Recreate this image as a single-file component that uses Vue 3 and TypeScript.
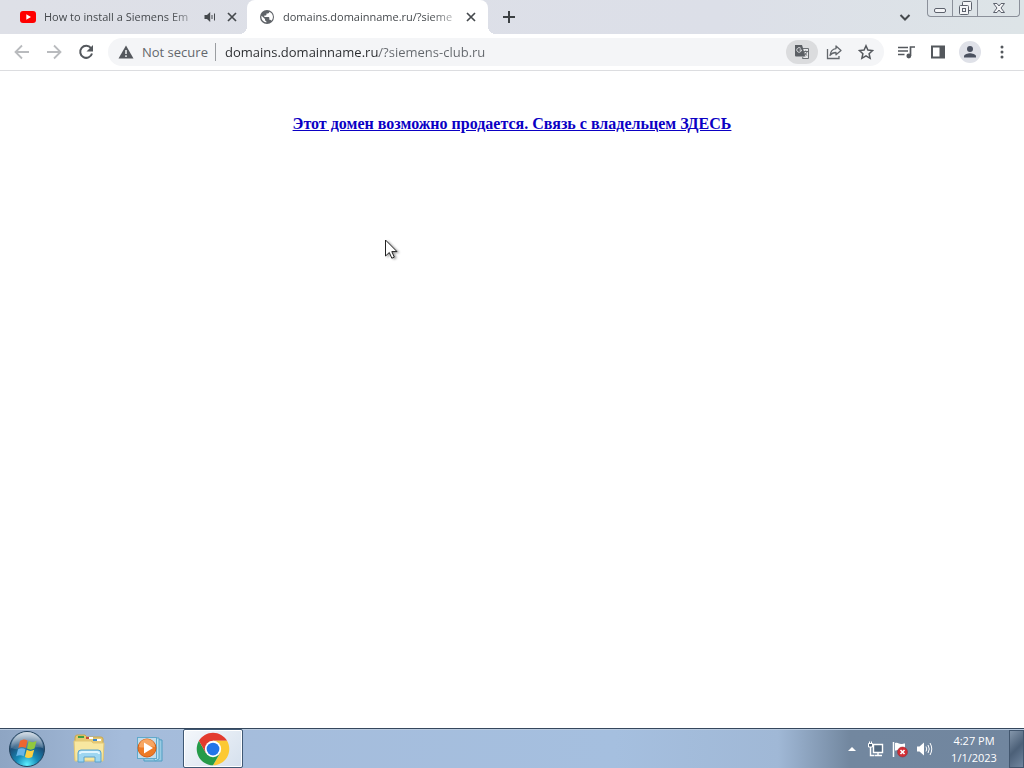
<script setup lang="ts">
import { ref } from 'vue'

const address = ref('domains.domainname.ru/?siemens-club.ru')
</script>

<template>
  <div class="desktop">
    <header class="tabstrip">
      <div class="tab tab-back">
        <svg class="icon" width="16" height="16" viewBox="0 0 16 16" aria-hidden="true">
          <rect x="0" y="2" width="16" height="12" rx="3" fill="#f00" />
          <path d="M6.3 5.2v5.6L11 8z" fill="#fff" />
        </svg>
        <span class="title">How to install a Siemens Em</span>
        <button class="plain" aria-label="Mute tab">
          <svg width="16" height="16" viewBox="0 0 16 16">
            <path d="M2.500 6H5l3.200-3v10L5 10H2.500z" fill="#45494d" />
            <path d="M10 6v4M12.500 4.500v7" stroke="#45494d" fill="none" />
          </svg>
        </button>
        <button class="plain close" aria-label="Close tab">
          <svg width="16" height="16" viewBox="0 0 16 16">
            <path d="M4 4l8 8M12 4l-8 8" stroke="#45494d" stroke-width="1.700" />
          </svg>
        </button>
      </div>
      <div class="tab tab-front">
        <svg class="icon" width="16" height="16" viewBox="0 0 24 24" aria-hidden="true">
          <path fill="#5f6368" d="M12 1.500a10.500 10.500 0 1 0 0 21 10.500 10.500 0 0 0 0-21zm-1 18.800A8.400 8.400 0 0 1 3.800 10.100L9 15v1.100c0 1.200.9 2.100 2 2.100zm7.500-2.500c-.3-.9-1.100-1.500-2-1.500h-1v-3.200c0-.6-.5-1.100-1.100-1.100H8V9.900h2.100c.6 0 1.100-.5 1.100-1.100V6.700h2.100c1.200 0 2.100-1 2.100-2.100V4a8.500 8.500 0 0 1 3.100 13.800z" />
        </svg>
        <span class="title">domains.domainname.ru/?sieme</span>
        <button class="plain close" aria-label="Close tab">
          <svg width="16" height="16" viewBox="0 0 16 16">
            <path d="M4 4l8 8M12 4l-8 8" stroke="#45494d" stroke-width="1.700" />
          </svg>
        </button>
      </div>
      <button class="plain new-tab" aria-label="New tab">
        <svg width="16" height="16" viewBox="0 0 16 16">
          <path d="M8 2v12M2 8h12" stroke="#3c4043" stroke-width="2" />
        </svg>
      </button>
      <div class="spacer"></div>
      <button class="plain search-tabs" aria-label="Search tabs">
        <svg width="16" height="16" viewBox="0 0 16 16">
          <path d="M3.500 6L8 10.500 12.500 6" stroke="#45494d" stroke-width="2" fill="none" />
        </svg>
      </button>
      <div class="window-buttons">
        <button aria-label="Minimize">
          <svg width="14" height="14" viewBox="0 0 14 14">
            <rect x="1.500" y="7.500" width="11" height="4" rx="1.500" fill="#f4f5f7" stroke="#5d626d" />
          </svg>
        </button>
        <button aria-label="Restore">
          <svg width="14" height="14" viewBox="0 0 14 14" fill="#f4f5f7" stroke="#5d626d">
            <rect x="4.500" y=".5" width="9" height="9" rx="1" />
            <rect x="1.500" y="4.500" width="9" height="9" rx="1" />
            <rect x="4.500" y="7.500" width="3" height="3" />
          </svg>
        </button>
        <button class="wide" aria-label="Close window">
          <svg width="14" height="14" viewBox="0 0 14 14">
            <path d="M1.500 2.500h3.500l2 2.500 2-2.500h3.500L9 7l3.500 4.500H9L7 9l-2 2.500H1.500L5 7z" fill="#f4f5f7" stroke="#5d626d" />
          </svg>
        </button>
      </div>
    </header>

    <nav class="toolbar">
      <button class="tool" aria-label="Back">
        <svg width="16" height="16" viewBox="0 0 16 16" fill="none" stroke="#b9bbbe" stroke-width="1.800">
          <path d="M15 8H2M8 1.500L1.500 8 8 14.500" />
        </svg>
      </button>
      <button class="tool" aria-label="Forward">
        <svg width="16" height="16" viewBox="0 0 16 16" fill="none" stroke="#b9bbbe" stroke-width="1.800">
          <path d="M1 8h13M8 1.500L14.500 8 8 14.500" />
        </svg>
      </button>
      <button class="tool" aria-label="Reload">
        <svg width="16" height="16" viewBox="0 0 16 16">
          <path d="M13 4.200A6 6 0 1 0 14 9.500" fill="none" stroke="#54585d" stroke-width="2" />
          <path d="M15 1v6.500H8.500z" fill="#54585d" />
        </svg>
      </button>
      <div class="omnibox">
        <button class="security">
          <svg width="16" height="16" viewBox="0 0 16 16">
            <path d="M8 1.500L15.500 14.500H.5z" fill="#54585d" />
            <path d="M8 6v4M8 11.200v1.800" stroke="#f1f3f4" stroke-width="1.500" />
          </svg>
          <span>Not secure</span>
        </button>
        <input v-model="address" class="address" type="text" aria-label="Address and search bar" spellcheck="false" />
        <button class="tool translate" aria-label="Translate this page">
          <svg width="16" height="16" viewBox="0 0 16 16">
            <path d="M7.500 4.500h7v10h-6" fill="#e8e9eb" stroke="#6b6f73" />
            <path d="M1 1h7l3.500 11.500H2a1 1 0 0 1-1-1z" fill="#5b5f64" />
            <path d="M7.500 6H5.500M7.400 6A2.300 2.300 0 1 1 6.800 4.400" fill="none" stroke="#e4e5e7" />
            <path d="M9.500 7.500h4.500M11.700 6.500v1M13 7.500c-.4 2-1.500 3-3 4M10.500 8.500c.5 1.300 1.500 2.200 2.700 3M9 12.500l-.5 2" fill="none" stroke="#6b6f73" />
          </svg>
        </button>
        <button class="tool" aria-label="Share this page">
          <svg width="16" height="16" viewBox="0 0 16 16" fill="none" stroke="#63676c" stroke-width="1.300">
            <path d="M1.500 5v9.500h11.500V12" />
            <path d="M10 2l5 4.500-5 4.300V8.500c-2.500 0-4.500.8-6 3C4.500 7.500 6.500 5 10 4.600z" stroke-linejoin="round" />
          </svg>
        </button>
        <button class="tool" aria-label="Bookmark this tab">
          <svg width="16" height="16" viewBox="0 0 16 16">
            <path d="M8 1.800l1.900 4.300 4.700.5-3.500 3.100 1 4.600L8 11.900l-4.100 2.400 1-4.600L1.400 6.600l4.700-.5z" fill="none" stroke="#54585d" stroke-width="1.500" />
          </svg>
        </button>
      </div>
      <button class="tool" aria-label="Media controls">
        <svg width="18" height="16" viewBox="0 0 18 16">
          <path d="M1 3.500h10M1 7h10M1 10.500h6.500M13.500 12V3H18" fill="none" stroke="#54585d" stroke-width="1.700" />
          <circle cx="11.800" cy="12" r="2.400" fill="#54585d" />
        </svg>
      </button>
      <button class="tool" aria-label="Side panel">
        <svg width="16" height="16" viewBox="0 0 16 16">
          <path d="M1 1.500h14v13H1zM3 3.500v9h6.500v-9z" fill="#54585d" fill-rule="evenodd" />
        </svg>
      </button>
      <button class="tool" aria-label="Profile">
        <svg width="22" height="22" viewBox="0 0 22 22">
          <circle cx="11" cy="11" r="11" fill="#dfe1e8" />
          <circle cx="11" cy="8" r="3" fill="#4b5160" />
          <path d="M5 16.500v-1.300c0-2 4-3 6-3s6 1 6 3v1.300z" fill="#4b5160" />
        </svg>
      </button>
      <button class="tool" aria-label="Menu">
        <svg width="16" height="16" viewBox="0 0 16 16" fill="#54585d">
          <circle cx="8" cy="3" r="1.500" />
          <circle cx="8" cy="8" r="1.500" />
          <circle cx="8" cy="13" r="1.500" />
        </svg>
      </button>
    </nav>

    <main class="page">
      <a href="#contact">Этот домен возможно продается. Связь с владельцем ЗДЕСЬ</a>
      <svg class="pointer" width="16" height="22" viewBox="0 0 16 22" aria-hidden="true">
        <path d="M1.500 1v16l3.800-3.500 2.500 5.700 2.500-1.100-2.500-5.500h5.200z" fill="#fff" stroke="#222" />
      </svg>
    </main>

    <footer class="taskbar">
      <button class="task start" aria-label="Start">
        <svg width="38" height="38" viewBox="0 0 38 38">
          <defs>
            <radialGradient id="orb" cx=".5" cy=".95" r=".9">
              <stop offset="0" stop-color="#5ff0ff" />
              <stop offset=".35" stop-color="#168bb8" />
              <stop offset=".7" stop-color="#1c4e78" />
              <stop offset="1" stop-color="#7d99b4" />
            </radialGradient>
            <linearGradient id="gloss" x2="0" y2="1">
              <stop offset="0" stop-color="#fff" stop-opacity=".65" />
              <stop offset="1" stop-color="#fff" stop-opacity=".12" />
            </linearGradient>
          </defs>
          <circle cx="19" cy="19" r="17.500" fill="url(#orb)" stroke="#24435e" />
          <path d="M3 18a16 16 0 0 1 32 0c-9-3-22 4-32 0z" fill="url(#gloss)" />
          <path d="M12 11c3-2 5-2 7.500-.5L17.800 18c-2.500-1.500-5-1.500-7.500 0z" fill="#ed6530" />
          <path d="M20.700 11c2.500 1.500 5 1.500 7.800 0l-2 7.500c-2.500 1.500-5 1.500-7.500 0z" fill="#91c83e" />
          <path d="M10 19.300c2.500-1.500 5-1.500 7.500 0l-1.800 7c-2.500-1.500-5-1.300-7.500 0z" fill="#67b5e8" />
          <path d="M18.700 19.800c2.500 1.500 5 1.500 7.500 0l-2 7.200c-2.500 1.400-5 1.400-7.300 0z" fill="#fbd043" />
        </svg>
      </button>
      <button class="task explorer" aria-label="Windows Explorer">
        <svg width="34" height="32" viewBox="0 0 34 32">
          <path d="M3 5q0-3 2-3h8l2 2h14q2 0 2 2v21H3z" fill="#e7ca73" stroke="#c9a64d" />
          <path d="M6 3h6v2H6z" fill="#3e9d45" />
          <path d="M14 4h7v2h-7z" fill="#fff" />
          <path d="M14 4h3v2h-3z" fill="#c94a37" />
          <path d="M21 6h8v2h-8z" fill="#fff" />
          <path d="M21 6h4v2h-4z" fill="#3b86cc" />
          <path d="M2 8h17l2 2h11l-1 18H3z" fill="#f8e7a0" stroke="#e2c776" />
          <path d="M6 29V20q0-3 3-3h17q3 0 3 3v9h-6v-5H12v5z" fill="#9ed6f1" stroke="#5ba3cc" />
          <path d="M8 21q0-2 2-2h15q2 0 2 2" fill="none" stroke="#dff5ff" stroke-width="2" />
        </svg>
      </button>
      <button class="task" aria-label="Windows Media Player">
        <svg width="30" height="28" viewBox="0 0 30 28">
          <path d="M8 3l19 2v21H9z" fill="#9acbe3" stroke="#4f9dc2" />
          <path d="M7 3h17v21l-4 2z" fill="#bce0ef" stroke="#5aa6c9" />
          <rect x="2.500" y="2.500" width="19" height="21" fill="#c3dcea" stroke="#60a9cb" />
          <circle cx="12" cy="13" r="9" fill="#ed7b26" stroke="#d45d14" />
          <path d="M4 12a8 8 0 0 1 16 0c-5-2-10 2-16 0z" fill="#f7a662" />
          <path d="M9 7.500v11L18 13z" fill="#fff" />
        </svg>
      </button>
      <button class="task active" aria-label="Google Chrome">
        <svg width="34" height="34" viewBox="0 0 48 48">
          <path d="M24 24L4.100 12.500A23 23 0 0 1 43.900 12.500H24z" fill="#e33b2e" />
          <path d="M24 12.500h19.900A23 23 0 0 1 24 47l10-17.200z" fill="#fcc934" />
          <path d="M14 29.800L4.100 12.500A23 23 0 0 0 24 47l10-17.200z" fill="#269b49" />
          <path d="M4.100 12.500L14 29.800l10-17.300z" fill="#e33b2e" />
          <circle cx="24" cy="24" r="11.500" fill="#fff" />
          <circle cx="24" cy="24" r="9" fill="#2475e8" />
        </svg>
      </button>
      <div class="spacer"></div>
      <div class="tray">
        <button class="plain" aria-label="Show hidden icons">
          <svg width="8" height="16" viewBox="0 0 8 16">
            <path d="M0 10l4-4 4 4z" fill="#fff" />
          </svg>
        </button>
        <button class="plain" aria-label="Network">
          <svg width="18" height="18" viewBox="0 0 18 18">
            <path d="M6.500 4.500h9v8h-9z" fill="#52687f" stroke="#fff" stroke-width="1.400" />
            <path d="M3.500 7v8.500h4M8 15.500h7M11 13v2" fill="none" stroke="#fff" stroke-width="1.400" />
            <path d="M1.500 3.500h4V7h-4zM2.500 1.500v2M4.500 1.500v2" fill="#52687f" stroke="#fff" />
          </svg>
        </button>
        <button class="plain" aria-label="Action Center">
          <svg width="18" height="18" viewBox="0 0 18 18">
            <path d="M2.500 2v15" stroke="#fff" stroke-width="1.500" />
            <path d="M4 3c3-1 4 1 6 1 1.500 0 3-.5 4-.5V11c-3 1-4-1-6-1-1.500 0-3 .5-4 .5z" fill="#fff" />
            <circle cx="11.500" cy="12" r="5" fill="#d32e35" stroke="#8b2730" stroke-width=".5" />
            <path d="M9.500 10l4 4M13.500 10l-4 4" stroke="#fff" stroke-width="1.600" />
          </svg>
        </button>
        <button class="plain" aria-label="Volume">
          <svg width="18" height="18" viewBox="0 0 18 18">
            <path d="M2 6.500h2.500L9 2.500v13l-4.500-4H2z" fill="#fff" />
            <path d="M11 6.500q1.500 2.500 0 5M13 5q2.500 4 0 8M15 3q3.500 6 0 12" fill="none" stroke="#fff" />
          </svg>
        </button>
      </div>
      <button class="clock">
        <span>4:27 PM</span>
        <span>1/1/2023</span>
      </button>
      <button class="show-desktop" aria-label="Show desktop"></button>
    </footer>
  </div>
</template>

<style>
body {
  margin: 0;
}
</style>

<style scoped>
.desktop {
  display: flex;
  flex-direction: column;
  min-height: 100vh;
  background: #fff;
  font-family: "Open Sans", "Noto Sans", sans-serif;
}

button {
  display: flex;
  align-items: center;
  justify-content: center;
  flex: none;
  margin: 0;
  padding: 0;
  border: 0;
  background: none;
  font-family: inherit;
}

svg {
  display: block;
  flex: none;
}

.spacer {
  flex: 1;
}

.tabstrip {
  display: flex;
  height: 34px;
  background: linear-gradient(90deg, #dee0e7, #dcdfe8 70%, #dde4e7);
}

.tab {
  display: flex;
  align-items: center;
  box-sizing: border-box;
  min-width: 0;
  height: 34px;
}

.tab-back {
  flex: 0 1 247px;
  padding: 0 7px 0 20px;
}

.tab-front {
  position: relative;
  flex: 0 1 241px;
  padding: 0 9px 0 12px;
  border-radius: 8px 8px 0 0;
  background: #fff;
}

.tab-front::before,
.tab-front::after {
  content: "";
  position: absolute;
  bottom: 0;
  width: 8px;
  height: 8px;
}

.tab-front::before {
  right: 100%;
  background: radial-gradient(circle at 0 0, transparent 8px, #fff 8px);
}

.tab-front::after {
  left: 100%;
  background: radial-gradient(circle at 100% 0, transparent 8px, #fff 8px);
}

.title {
  flex: 1;
  min-width: 0;
  margin-left: 8px;
  overflow: hidden;
  color: #45494d;
  font-size: 11px;
  line-height: 18px;
  white-space: nowrap;
  mask-image: linear-gradient(90deg, #000 calc(100% - 24px), rgba(0, 0, 0, 0.3));
}

.tab .plain {
  margin-left: 8px;
}

.tab .close {
  margin-left: 6px;
}

.tab-front .close {
  margin-left: 8px;
}

.new-tab {
  width: 28px;
  margin-left: 7px;
}

.search-tabs {
  width: 28px;
  margin-right: 8px;
}

.window-buttons {
  display: flex;
  height: 16px;
  margin-right: 4px;
  overflow: hidden;
  border: 1px solid #8b909a;
  border-top: 0;
  border-radius: 0 0 4px 4px;
}

.window-buttons button {
  width: 25px;
  border-right: 1px solid #8b909a;
}

.window-buttons .wide {
  width: 41px;
  border-right: 0;
}

.toolbar {
  display: flex;
  align-items: center;
  height: 36px;
  padding: 0 6px;
  border-bottom: 1px solid #dcdde0;
  background: #fff;
}

.tool {
  width: 32px;
  height: 28px;
}

.omnibox {
  display: flex;
  flex: 1;
  align-items: center;
  min-width: 0;
  height: 28px;
  margin: 0 6px;
  padding-right: 2px;
  border-radius: 14px;
  background: #f4f5f7;
}

.security {
  gap: 8px;
  height: 18px;
  margin-left: 10px;
  padding-right: 7px;
  border-right: 1px solid #9a9da1;
  color: #63676c;
  font-size: 13px;
  line-height: 18px;
}

.address {
  flex: 1;
  min-width: 0;
  padding: 0 0 0 9px;
  border: 0;
  outline: 0;
  background: linear-gradient(90deg, #292b2e 163px, #63676c 163px);
  background-clip: text;
  color: transparent;
  font-family: inherit;
  font-size: 13px;
  line-height: 20px;
}

.translate {
  height: 24px;
  border-radius: 12px;
  background: #dbdcde;
}

.page {
  position: relative;
  flex: 1;
  padding-top: 43px;
  font-family: "Liberation Serif", "Times New Roman", serif;
  font-size: 16px;
  font-weight: bold;
  line-height: 20px;
  text-align: center;
}

.page a {
  color: #0b00c4;
}

.pointer {
  position: absolute;
  top: 168px;
  left: 384px;
  filter: drop-shadow(2px 1px 1px rgba(0, 0, 0, 0.35));
}

.taskbar {
  display: flex;
  align-items: center;
  height: 39px;
  border-top: 1px solid #35475c;
  background: linear-gradient(90deg, #8ea5c3, #a5bcdb 12%, #a5bfdf 60%, #a0b8d6 76%, #72879f 83%, #71869f);
  box-shadow: inset 0 1px #b9cbe0;
}

.task {
  width: 60px;
  height: 39px;
}

.start {
  width: 54px;
}

.explorer {
  margin-left: 4px;
  width: 62px;
}

.active {
  box-sizing: border-box;
  margin-left: 3px;
  border: 1px solid #3f5874;
  border-radius: 2px;
  background: linear-gradient(135deg, #f4f7fb, #d5e0ed);
  box-shadow: inset 0 0 0 1px #fff;
}

.tray {
  display: flex;
  align-items: center;
  gap: 6px;
  margin-right: 14px;
}

.tray .plain:first-child {
  margin-right: 5px;
}

.clock {
  flex-direction: column;
  width: 54px;
  margin-right: 8px;
  color: #fff;
  font-size: 11px;
  line-height: 17px;
}

.show-desktop {
  box-sizing: border-box;
  width: 15px;
  height: 38px;
  border: 1px solid #42566e;
  background: linear-gradient(135deg, #8496ab, #4c6078 50%, #71869f);
}
</style>
